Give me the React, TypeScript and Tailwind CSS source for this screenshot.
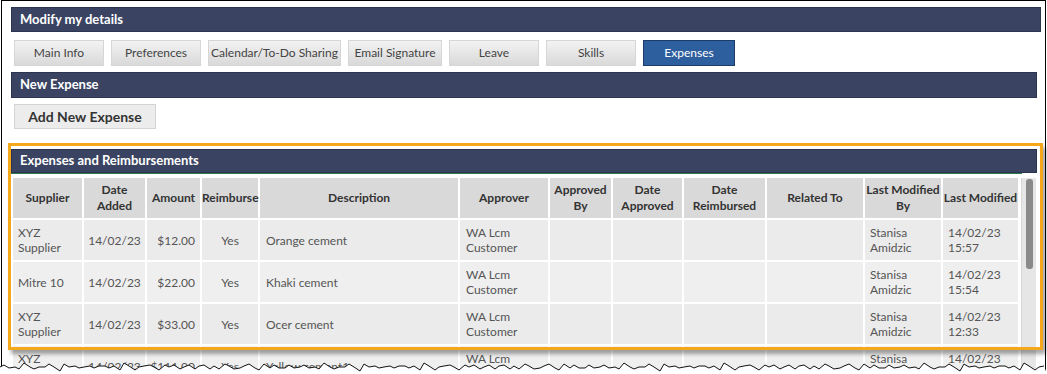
import React from "react";

const tabs = [
  { label: "Main Info", w: "w-[90px]" },
  { label: "Preferences", w: "w-[90px]" },
  { label: "Calendar/To-Do Sharing", w: "w-[133px]" },
  { label: "Email Signature", w: "w-[94px]" },
  { label: "Leave", w: "w-[90px]" },
  { label: "Skills", w: "w-[90px]" },
];

const cols = [
  { h: ["Supplier"], w: "w-[69px]" },
  { h: ["Date", "Added"], w: "w-[61px]" },
  { h: ["Amount"], w: "w-[53px]" },
  { h: ["Reimburse"], w: "w-[56px]" },
  { h: ["Description"], w: "w-[198px]" },
  { h: ["Approver"], w: "w-[88px]" },
  { h: ["Approved", "By"], w: "w-[61px]" },
  { h: ["Date", "Approved"], w: "w-[69px]" },
  { h: ["Date", "Reimbursed"], w: "w-[81px]" },
  { h: ["Related To"], w: "w-[96px]" },
  { h: ["Last Modified", "By"], w: "w-[76px]" },
  { h: ["Last Modified"], w: "w-[75px]" },
];

const rows = [
  ["XYZ Supplier", "$12.00", "Orange cement", "15:57"],
  ["Mitre 10", "$22.00", "Khaki cement", "15:54"],
  ["XYZ Supplier", "$33.00", "Ocer cement", "12:33"],
  ["XYZ Supplier", "$111.00", "Yellow cement1", "12:10"],
];

// jagged torn-paper edge along the bottom
const tear = (() => {
  const pts: string[] = [];
  let x = 0;
  let i = 0;
  while (x <= 1047) {
    const y = 366 + ((i * 7) % 5) - ((i * 3) % 4) + (i % 3 === 0 ? 1 : 0);
    pts.push(`${x},${y}`);
    x += 4 + (i % 3);
    i++;
  }
  return pts.join(" ");
})();

const Bar = ({ title, w, h }: { title: string; w: string; h: string }) => (
  <div
    className={`${w} ${h} bg-[#3a4462] border border-[#2c3550] flex items-center pl-[8px] text-white font-bold text-[13px]`}
  >
    {title}
  </div>
);

const App = () => {
  return (
    <div className="relative w-[1047px] h-[374px] overflow-hidden bg-white font-['Lato',sans-serif]">
      <div className="ml-px w-[1045px] h-full border-x border-t border-black pl-[9px] pt-[6px]">
        <Bar title="Modify my details" w="w-[1030px]" h="h-[25px]" />

        {/* tabs */}
        <div className="flex gap-[7px] mt-[8px] ml-[3px]">
          {tabs.map((t) => (
            <div
              key={t.label}
              className={`${t.w} h-[26px] flex items-center justify-center text-[12px] text-[#444] border border-[#d6d6d6] bg-gradient-to-b from-[#f3f3f3] to-[#d9d9d9]`}
            >
              {t.label}
            </div>
          ))}
          <div className="w-[92px] h-[26px] flex items-center justify-center text-[12px] text-white bg-[#2d5e9d] border border-[#1d3c6a]">
            Expenses
          </div>
        </div>

        <div className="mt-[6px]">
          <Bar title="New Expense" w="w-[1026px]" h="h-[26px]" />
        </div>

        <div className="mt-[6px] ml-[3px] w-[142px] h-[25px] flex items-center justify-center text-[14px] font-bold text-[#333] bg-[#ececec] border border-[#d4d4d4]">
          Add New Expense
        </div>

        {/* Expenses and Reimbursements */}
        <div className="mt-[20px] w-[1026px]">
          <Bar title="Expenses and Reimbursements" w="w-full" h="h-[24px]" />
          <div className="h-px w-[1011px] bg-[#2e7a4c]" />
          <div className="flex pt-[2px]">
            <table className="table-fixed border-separate border-spacing-[2px] text-[12px] leading-[15px] w-[1009px]">
              <colgroup>
                {cols.map((c) => (
                  <col key={c.h.join(" ")} className={c.w} />
                ))}
              </colgroup>
              <thead>
                <tr className="h-[40px]">
                  {cols.map((c) => (
                    <th key={c.h.join(" ")} className="bg-[#d9d9d9] font-bold text-[12px] leading-[16px] text-[#333] text-center px-0 whitespace-nowrap">
                      {c.h.map((l, j) => (
                        <div key={j}>{l}</div>
                      ))}
                    </th>
                  ))}
                </tr>
              </thead>
              <tbody className="text-[#555]">
                {rows.map((r, i) => {
                  const bg = i % 2 ? "bg-[#efefef]" : "bg-[#ebebeb]";
                  return (
                    <tr key={i} className="h-[40px]">
                      <td className={`${bg} pl-[5px]`}>{r[0]}</td>
                      <td className={`${bg} text-center`}>14/02/23</td>
                      <td className={`${bg} text-right pr-[5px]`}>{r[1]}</td>
                      <td className={`${bg} text-center`}>Yes</td>
                      <td className={`${bg} pl-[6px]`}>{r[2]}</td>
                      <td className={`${bg} pl-[6px] pr-[20px]`}>WA Lcm Customer</td>
                      <td className={bg} />
                      <td className={bg} />
                      <td className={bg} />
                      <td className={bg} />
                      <td className={`${bg} pl-[5px] pr-[10px]`}>Stanisa Amidzic</td>
                      <td className={`${bg} pl-[5px] pr-[15px]`}>14/02/23 {r[3]}</td>
                    </tr>
                  );
                })}
              </tbody>
            </table>
            {/* scrollbar */}
            <div className="w-[15px] ml-px mt-[2px] bg-[#e6e6e6] border-l border-[#d8d8d8] flex justify-center">
              <div className="w-[7px] h-[90px] mt-px rounded-[3px] bg-[#8a8a8a]" />
            </div>
          </div>
        </div>
      </div>

      {/* orange annotation box */}
      <div className="absolute left-[8px] top-[143px] w-[1035px] h-[207px] border-[3px] border-[#f5a81c] shadow-[3px_4px_4px_rgba(0,0,0,0.35)] pointer-events-none" />

      {/* torn edge */}
      <svg className="absolute left-0 top-0" width="1047" height="374">
        <polygon points={`0,374 ${tear} 1047,374`} fill="#fff" />
        <polyline points={tear} fill="none" stroke="#111" strokeWidth="1" />
      </svg>
    </div>
  );
};

export default App;
